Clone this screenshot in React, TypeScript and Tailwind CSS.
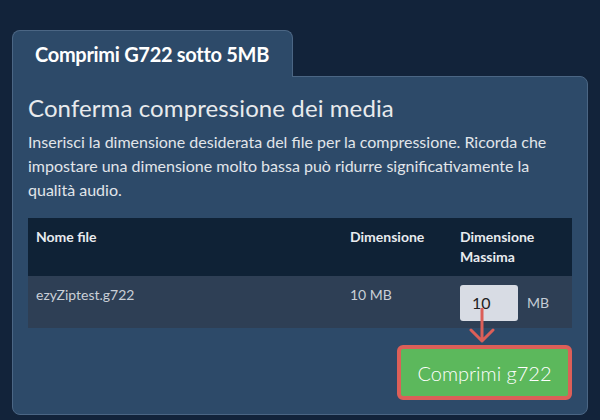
export default function App() {
  return (
    <div
      className="w-[600px] h-[420px] bg-[#12233a] pt-[30px] px-[12px] overflow-hidden"
      style={{ fontFamily: "Lato, 'Open Sans', sans-serif" }}
    >
      {/* tab */}
      <div className="relative z-10 -mb-px w-[281px] h-[47px] bg-[#2d4a69] border border-b-0 border-[#4b6684] rounded-t-[8px] pl-[22px] flex items-center">
        <span className="text-[20px] font-bold text-white tracking-[-0.3px]">Comprimi G722 sotto 5MB</span>
      </div>

      {/* panel */}
      <div className="w-[576px] h-[339px] bg-[#2d4a69] border border-[#4b6684] rounded-b-[8px] rounded-tr-[8px] pl-[15px] pr-[14px] pt-[16px]">
        <h1 className="text-[24px] leading-[30px] text-[#e8eaed] tracking-[0.1px]">Conferma compressione dei media</h1>
        <p className="mt-[7px] text-[16px] leading-[24px] text-[#e1e5ea] pr-[10px]">
          Inserisci la dimensione desiderata del file per la compressione. Ricorda che impostare una dimensione molto bassa può ridurre significativamente la qualità audio.
        </p>

        <div className="mt-[16px] w-[544px]">
          <div className="flex h-[58px] bg-[#0f2236] text-[14px] leading-[20px] font-bold text-[#e8ebef] pt-[9px]">
            <div className="w-[322px] pl-[8px]">Nome file</div>
            <div className="w-[110px]">Dimensione</div>
            <div className="w-[112px]">
              Dimensione
              <br />
              Massima
            </div>
          </div>
          <div className="flex h-[52px] bg-[#2e3f55] text-[14px] leading-[20px] text-[#c9cfd7] pt-[9px]">
            <div className="w-[322px] pl-[8px]">ezyZiptest.g722</div>
            <div className="w-[110px]">10 MB</div>
            <div className="w-[112px] flex items-start">
              <div className="relative">
                <div className="w-[58px] h-[36px] bg-[#d8dce4] rounded-[3px] pl-[12px] pt-[8px] text-[16px] leading-[20px] text-[#222]">
                  10
                </div>
                <svg
                  className="absolute left-[8px] top-[23px]"
                  width="28"
                  height="36"
                  viewBox="0 0 28 36"
                  fill="none"
                  stroke="#dc5f58"
                  strokeWidth="3"
                  strokeLinecap="round"
                  strokeLinejoin="round"
                >
                  <path d="M14 1v32M3 22l11 11 11-11" />
                </svg>
              </div>
              <span className="ml-[9px] mt-[8px] text-[#c5ccd5]">MB</span>
            </div>
          </div>
        </div>

        <div className="mt-[17px] w-[544px] flex justify-end">
          <button className="w-[175px] h-[55px] bg-[#5cb85c] border-[4px] border-[#dc5f58] rounded-[6px] text-white text-[20px] font-light">
            Comprimi g722
          </button>
        </div>
      </div>
    </div>
  );
}
